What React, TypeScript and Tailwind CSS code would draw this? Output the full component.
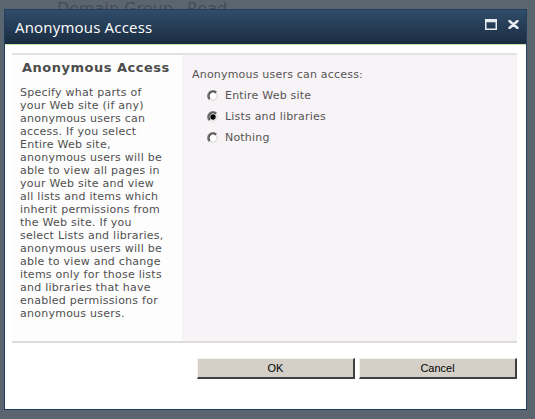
import React from "react";

const leftLines = [
  "Specify what parts of",
  "your Web site (if any)",
  "anonymous users can",
  "access. If you select",
  "Entire Web site,",
  "anonymous users will be",
  "able to view all pages in",
  "your Web site and view",
  "all lists and items which",
  "inherit permissions from",
  "the Web site. If you",
  "select Lists and libraries,",
  "anonymous users will be",
  "able to view and change",
  "items only for those lists",
  "and libraries that have",
  "enabled permissions for",
  "anonymous users.",
];

function Radio({ checked }: { checked?: boolean }) {
  return (
    <svg width="12" height="12" viewBox="0 0 12 12" className="shrink-0">
      <circle cx="6" cy="6" r="5.2" fill="#ffffff" />
      <path d="M2.32 9.68 A5.2 5.2 0 0 1 9.68 2.32" fill="none" stroke="#7a7a7a" strokeWidth="1.4" />
      <path d="M3.1 8.9 A4.1 4.1 0 0 1 8.9 3.1" fill="none" stroke="#2e2e2e" strokeWidth="1.1" />
      <path d="M9.68 2.32 A5.2 5.2 0 0 1 2.32 9.68" fill="none" stroke="#f2eff0" strokeWidth="1.2" />
      <path d="M8.9 3.1 A4.1 4.1 0 0 1 3.1 8.9" fill="none" stroke="#d4d0c8" strokeWidth="0.9" />
      {checked && <circle cx="6" cy="6" r="2.7" fill="#000000" />}
    </svg>
  );
}

function Btn({ label }: { label: string }) {
  return (
    <div className="w-[158px] h-[21px] bg-[#d4d0c8] border-t border-l border-t-[#f4f3ef] border-l-[#f4f3ef] border-b-2 border-r-2 border-b-[#404040] border-r-[#404040] flex items-center justify-center text-[11px] text-black leading-none" style={{ fontFamily: '"Liberation Sans", Arial, sans-serif' }}>
      {label}
    </div>
  );
}

export default function App() {
  return (
    <div className="w-[535px] h-[419px] bg-[#5b6570] relative overflow-hidden">
      <div className="absolute left-[57px] top-[1px] text-[16px] leading-[16px] text-[#444d57] flex gap-[14px]" style={{ fontFamily: '"DejaVu Sans", Verdana, sans-serif' }}>
        <span>Domain Group</span>
        <span>Read</span>
      </div>
      <div className="absolute left-[4px] top-[9px] w-[523px] h-[401px] border border-[#1f3f60] bg-white flex flex-col">
        <div className="h-[35px] shrink-0 bg-gradient-to-b from-[#314d6a] to-[#1a2c41] border-b border-b-[#c9e2a6] flex items-center justify-between pl-[10px] pr-[7px]">
          <span className="text-[15px] text-white tracking-[0.2px]" style={{ fontFamily: '"Open Sans", "DejaVu Sans", sans-serif' }}>
            Anonymous Access
          </span>
          <div className="flex items-center gap-[11px] mt-[-5px]">
            <svg width="12" height="11" viewBox="0 0 12 11">
              <rect x="0.75" y="0.75" width="10.5" height="9.5" fill="none" stroke="#e8edf2" strokeWidth="1.5" />
              <rect x="0.75" y="0.75" width="10.5" height="2.5" fill="#e8edf2" />
            </svg>
            <svg width="11" height="9" viewBox="0 0 11 9">
              <path d="M1.5 1 L9.5 8 M9.5 1 L1.5 8" stroke="#e8edf2" strokeWidth="2.4" strokeLinecap="round" />
            </svg>
          </div>
        </div>
        <div className="flex-1 flex flex-col pl-[7px] pr-[9px] pt-[8px]">
          <div className="h-[2px] bg-[#e2e2e2]" />
          <div className="flex h-[286px]">
            <div className="w-[170px] shrink-0 bg-[#fdfdfd] pl-[8px] pt-[5px] text-[#4c4c4c]" style={{ fontFamily: '"DejaVu Sans", Verdana, sans-serif' }}>
              <div className="text-[13px] font-bold leading-[16px] pl-[2px] tracking-[0.5px]">Anonymous Access</div>
              <div className="mt-[10px] text-[11px] leading-[13px] text-[#505050] tracking-[0.25px]">
                {leftLines.map((l, i) => (
                  <div key={i} className="whitespace-nowrap">{l}</div>
                ))}
              </div>
            </div>
            <div className="flex-1 bg-[#f8f3f6] pl-[10px] pt-[13px] text-[11px] text-[#555555] tracking-[0.2px]" style={{ fontFamily: '"DejaVu Sans", Verdana, sans-serif' }}>
              <div className="leading-[14px]">Anonymous users can access:</div>
              <div className="mt-[7px] pl-[15px] flex flex-col gap-[7px]">
                {[
                  ["Entire Web site", false],
                  ["Lists and libraries", true],
                  ["Nothing", false],
                ].map(([t, c]) => (
                  <div key={t as string} className="flex items-center gap-[6px] h-[14px]">
                    <Radio checked={c as boolean} />
                    <span className="leading-[14px]">{t as string}</span>
                  </div>
                ))}
              </div>
            </div>
          </div>
          <div className="h-[2px] bg-[#dcdcdc]" />
          <div className="flex justify-end gap-[4px] mt-[15px]">
            <Btn label="OK" />
            <Btn label="Cancel" />
          </div>
        </div>
      </div>
    </div>
  );
}
